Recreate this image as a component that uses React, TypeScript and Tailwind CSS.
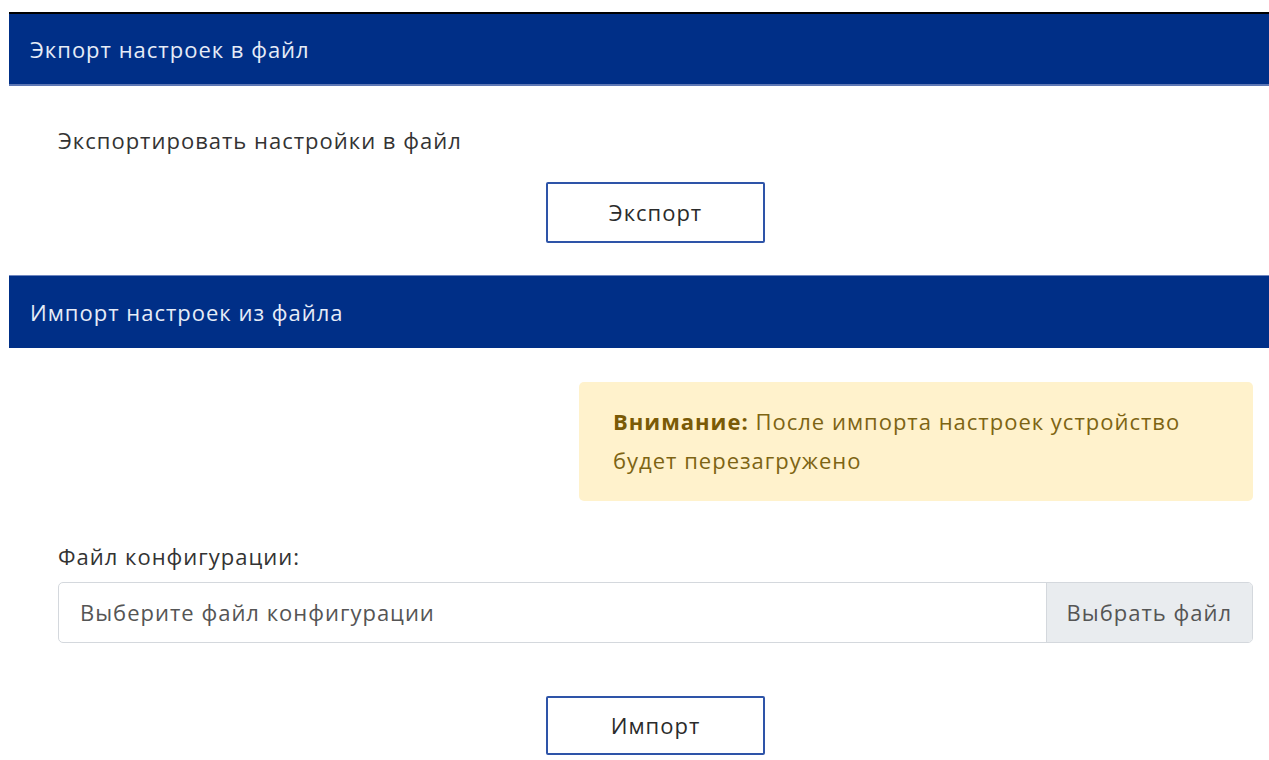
import React from "react";

const font = { fontFamily: '"Open Sans", "Noto Sans", sans-serif' };

function SectionHeader({ title, className = "" }: { title: string; className?: string }) {
  return (
    <div
      className={`flex items-center bg-[#002f87] pl-[21px] text-[22px] tracking-[1px] text-[#e6ecf7] ${className}`}
    >
      {title}
    </div>
  );
}

function OutlineButton({ label, className = "" }: { label: string; className?: string }) {
  return (
    <button
      className={`ml-[488px] flex w-[219px] items-center justify-center rounded-[2px] border-2 border-[#2e54a8] bg-white text-[22px] tracking-[1px] text-[#2b2b2b] ${className}`}
    >
      {label}
    </button>
  );
}

export default function App() {
  return (
    <div className="min-h-[760px] bg-white pt-[12px] pl-[9px]" style={font}>
      <div className="border-t-2 border-black">
        {/* Export */}
        <SectionHeader
          title="Экпорт настроек в файл"
          className="h-[72px] border-b-2 border-[#5d77b4]"
        />
        <div className="pl-[49px] pr-[16px]">
          <p className="mt-[40px] text-[22px] leading-[28px] tracking-[1px] text-[#333]">
            Экспортировать настройки в файл
          </p>
          <div className="mt-[28px] flex">
            <OutlineButton label="Экспорт" className="h-[61px]" />
          </div>
        </div>

        {/* Import */}
        <SectionHeader
          title="Импорт настроек из файла"
          className="mt-[32px] h-[73px] border-t border-[#6e86bf]"
        />
        <div className="pl-[49px] pr-[16px]">
          <p className="mt-[34px] ml-auto w-[674px] rounded-[5px] bg-[#fff2cc] px-[34px] pt-[20px] pb-[21px] text-[22px] leading-[39px] tracking-[1px] text-[#7d6413]">
            <b className="font-bold text-[#7a5a06]">Внимание:</b>{" "}
            <span>После импорта настроек устройство</span>{" "}
            <span className="inline-block">будет перезагружено</span>
          </p>

          <label className="mt-[41px] block text-[22px] leading-[28px] tracking-[1px] text-[#333]">
            Файл конфигурации:
          </label>
          <div className="mt-[12px] flex h-[61px] overflow-hidden rounded-[5px] border border-[#d4d8dd]">
            <div className="flex flex-1 items-center pl-[21px] text-[22px] tracking-[1px] text-[#555]">
              Выберите файл конфигурации
            </div>
            <div className="flex items-center border-l border-[#d4d8dd] bg-[#e9ecef] px-[20px] text-[22px] tracking-[1px] text-[#555]">
              Выбрать файл
            </div>
          </div>

          <div className="mt-[53px] flex">
            <OutlineButton label="Импорт" className="h-[59px]" />
          </div>
        </div>
      </div>
    </div>
  );
}
